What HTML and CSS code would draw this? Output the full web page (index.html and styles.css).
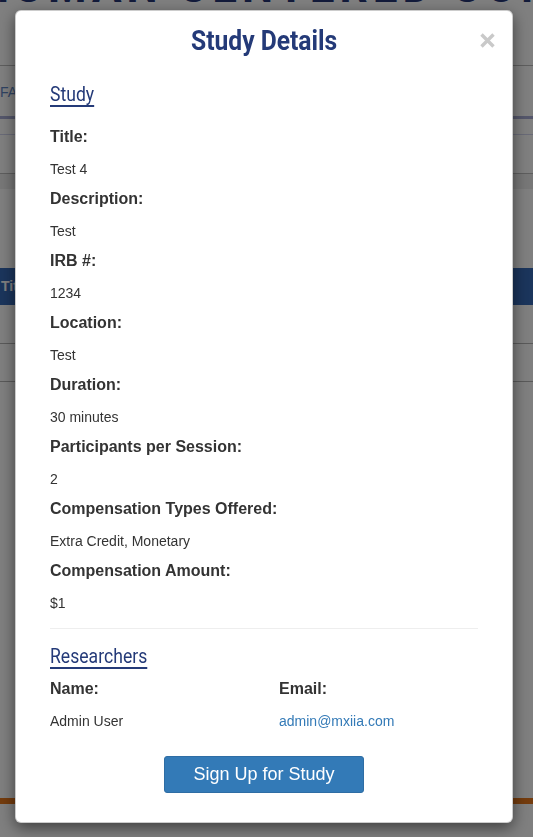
FILE: index.html
```html
<!DOCTYPE html>
<html lang="en">
<head>
<meta charset="utf-8">
<title>Study Details</title>
<link rel="stylesheet" href="styles.css">
</head>
<body>
<div class="page">
  <header class="masthead">
    <h1 class="site-title">HUMAN CENTERED COMPUTING</h1>
  </header>
  <nav class="tabs"><span class="tab">FAQ</span></nav>
  <div class="subbar"></div>
  <div class="filters"></div>
  <div class="band"></div>
  <div class="gap"></div>
  <div class="table-head"><span>Title</span></div>
  <div class="table-row"></div>
  <div class="table-row"></div>
  <div class="spacer"></div>
  <footer class="footer-bar"></footer>
</div>

<div class="backdrop"></div>

<div class="modal">
  <div class="dialog">
    <div class="dialog-header">
      <span></span>
      <h2 class="dialog-title"><span class="cond">Study Details</span></h2>
      <button class="close" type="button" aria-label="Close">
        <svg width="15" height="15" viewBox="0 0 15 15"><path d="M1.5 1.5 L13.5 13.5 M13.5 1.5 L1.5 13.5" stroke="#c9c9c9" stroke-width="3.4" fill="none"/></svg>
      </button>
    </div>
    <div class="dialog-body">
      <h3 class="section"><span class="cond">Study</span></h3>
      <div class="fields">
        <div class="label">Title:</div>
        <div class="value">Test 4</div>
        <div class="label">Description:</div>
        <div class="value">Test</div>
        <div class="label">IRB #:</div>
        <div class="value">1234</div>
        <div class="label">Location:</div>
        <div class="value">Test</div>
        <div class="label">Duration:</div>
        <div class="value">30 minutes</div>
        <div class="label">Participants per Session:</div>
        <div class="value">2</div>
        <div class="label">Compensation Types Offered:</div>
        <div class="value">Extra Credit, Monetary</div>
        <div class="label">Compensation Amount:</div>
        <div class="value">$1</div>
      </div>
      <hr class="divider">
      <h3 class="section section-tight"><span class="cond">Researchers</span></h3>
      <div class="researchers">
        <div class="label">Name:</div>
        <div class="label">Email:</div>
        <div class="value">Admin User</div>
        <div class="value"><a class="email" href="#">admin@mxiia.com</a></div>
      </div>
      <div class="actions">
        <button class="btn-primary" type="button">Sign Up for Study</button>
      </div>
    </div>
  </div>
</div>
</body>
</html>
```

FILE: styles.css
```css
* { box-sizing: border-box; }

html, body {
  margin: 0;
  padding: 0;
  background: #ffffff;
  font-family: "Liberation Sans", Arial, sans-serif;
  color: #333333;
  overflow: hidden;
}

/* ---------- page behind the modal ---------- */
.page {
  width: 533px;
}

.masthead {
  display: flow-root;
  height: 66px;
  border-bottom: 1px solid #bcbcbc;
  overflow: hidden;
}

.site-title {
  margin: -35px 0 0 -22px;
  font-family: Roboto, sans-serif;
  font-weight: 700;
  font-size: 44px;
  line-height: 44px;
  letter-spacing: 5px;
  color: #253675;
  white-space: nowrap;
}

.tabs {
  height: 53px;
  border-bottom: 3px solid #a9add6;
  padding-top: 17px;
}

.tab {
  font-size: 14px;
  line-height: 16px;
  color: #5f86c4;
}

.subbar {
  height: 16px;
  border-bottom: 1px solid #d2d5ee;
}

.filters {
  height: 39px;
  border-bottom: 1px solid #bcbcbc;
}

.band {
  height: 15px;
  background: #eeeeee;
}

.gap {
  height: 79px;
}

.table-head {
  height: 37px;
  background: #366ab8;
  color: #ffffff;
  font-weight: 700;
  font-size: 14px;
  line-height: 37px;
  padding-left: 1px;
}

.table-row {
  height: 39px;
  border-bottom: 1px solid #b4b4b4;
}
.table-row + .table-row {
  height: 38px;
}

.spacer {
  height: 416px;
}

.footer-bar {
  height: 6px;
  background: #e8781c;
}

/* ---------- backdrop + modal ---------- */
.backdrop {
  position: fixed;
  inset: 0;
  background: rgba(0, 0, 0, 0.5);
}

.modal {
  position: fixed;
  inset: 0;
  overflow: hidden;
}

.dialog {
  margin: 10px 0 0 15px;
  width: 498px;
  background: #ffffff;
  border: 1px solid rgba(0, 0, 0, 0.2);
  border-radius: 6px;
  box-shadow: 0 5px 15px rgba(0, 0, 0, 0.5);
}

.dialog-header {
  display: grid;
  grid-template-columns: 1fr auto 1fr;
  align-items: center;
  padding: 14px 17px 0 17px;
}

.dialog-title {
  margin: 0;
  font-family: Roboto, sans-serif;
  font-weight: 700;
  font-size: 28px;
  line-height: 31px;
  color: #243a78;
  text-align: center;
}

.dialog-title .cond {
  display: inline-block;
  transform: scaleX(0.88);
  transform-origin: center;
}

.close {
  justify-self: end;
  width: 15px;
  height: 15px;
  padding: 0;
  border: 0;
  background: none;
  display: flex;
}

.dialog-body {
  padding: 27px 34px 29px 34px;
}

.section {
  margin: 0 0 21px;
  font-family: Roboto, sans-serif;
  font-weight: 400;
  font-size: 20px;
  line-height: 22px;
  color: #243a78;
}

.section .cond {
  display: inline-block;
  transform: scaleX(0.88);
  transform-origin: left center;
  text-decoration: underline;
  text-decoration-thickness: 2px;
  text-underline-offset: 4px;
}

.section-tight {
  margin-bottom: 11px;
}

.label {
  font-weight: 700;
  font-size: 16px;
  line-height: 22px;
  margin-bottom: 11px;
  color: #333333;
}

.value {
  font-size: 14px;
  line-height: 20px;
  margin-bottom: 9px;
  color: #333333;
}

.divider {
  margin: 15px 0 16px;
  border: 0;
  border-top: 1px solid #eeeeee;
  height: 0;
}

.researchers {
  display: grid;
  grid-template-columns: 229px 1fr;
}

.researchers .value {
  margin-bottom: 0;
}

.email {
  color: #337ab7;
  text-decoration: none;
}

.actions {
  display: flex;
  justify-content: center;
  margin-top: 25px;
}

.btn-primary {
  font-family: "Liberation Sans", Arial, sans-serif;
  font-size: 18px;
  line-height: 23px;
  padding: 6px 28px;
  color: #ffffff;
  background: #337ab7;
  border: 1px solid #2e6da4;
  border-radius: 3px;
}
```
